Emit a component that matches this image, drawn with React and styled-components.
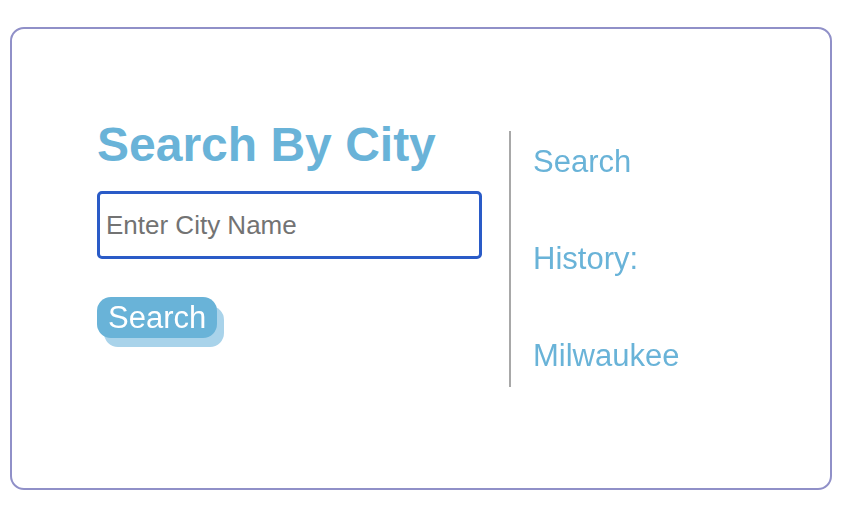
import React from "react";
import styled, { createGlobalStyle } from "styled-components";

const GlobalStyle = createGlobalStyle`
  body {
    margin: 0;
    background-color: #ffffff;
    font-family: "Liberation Sans", Arial, sans-serif;
  }
`;

function App() {
  const history = ["Milwaukee"];

  return (
    <>
      <GlobalStyle />
      <Card>
        <SearchColumn>
          <Title>Search By City</Title>
          <CityInput type="text" placeholder="Enter City Name" autoFocus />
          <SearchBtn>Search</SearchBtn>
        </SearchColumn>
        <HistoryColumn>
          <HistoryItem>Search</HistoryItem>
          <HistoryItem>History:</HistoryItem>
          {history.map((city) => (
            <HistoryItem key={city}>{city}</HistoryItem>
          ))}
        </HistoryColumn>
      </Card>
    </>
  );
}

const Card = styled.div`
  box-sizing: border-box;
  display: flex;
  align-items: flex-start;
  width: 822px;
  height: 463px;
  margin: 27px 0 0 10px;
  padding: 88px 0 0 85px;
  border: 2px solid #9090c8;
  border-radius: 14px;
`;

const SearchColumn = styled.div`
  display: flex;
  flex-direction: column;
  align-items: flex-start;
  width: 385px;
`;

const Title = styled.h1`
  margin: 0 0 18px 0;
  font-size: 48px;
  line-height: 56px;
  font-weight: bold;
  color: #69b3d8;
`;

const CityInput = styled.input`
  box-sizing: border-box;
  width: 385px;
  height: 68px;
  padding: 0 0 0 6px;
  border: 3px solid #2a5bc7;
  border-radius: 5px;
  outline: none;
  font-family: "Liberation Sans", Arial, sans-serif;
  font-size: 26px;
  color: #333333;

  &::placeholder {
    color: #737373;
  }
`;

const SearchBtn = styled.button`
  margin-top: 38px;
  height: 41px;
  padding: 0 11px;
  border: 0;
  border-radius: 14px;
  background-color: #69b3d8;
  box-shadow: 7px 9px 0 #a9d3ea;
  color: #ffffff;
  font-family: "Liberation Sans", Arial, sans-serif;
  font-size: 31px;
  line-height: 41px;
`;

const HistoryColumn = styled.div`
  display: flex;
  flex-direction: column;
  gap: 61px;
  margin: 14px 0 0 27px;
  padding: 13px 0 13px 22px;
  border-left: 2px solid #a8a8a8;
`;

const HistoryItem = styled.p`
  margin: 0;
  font-size: 31px;
  line-height: 36px;
  color: #69b3d8;
`;

export default App;
